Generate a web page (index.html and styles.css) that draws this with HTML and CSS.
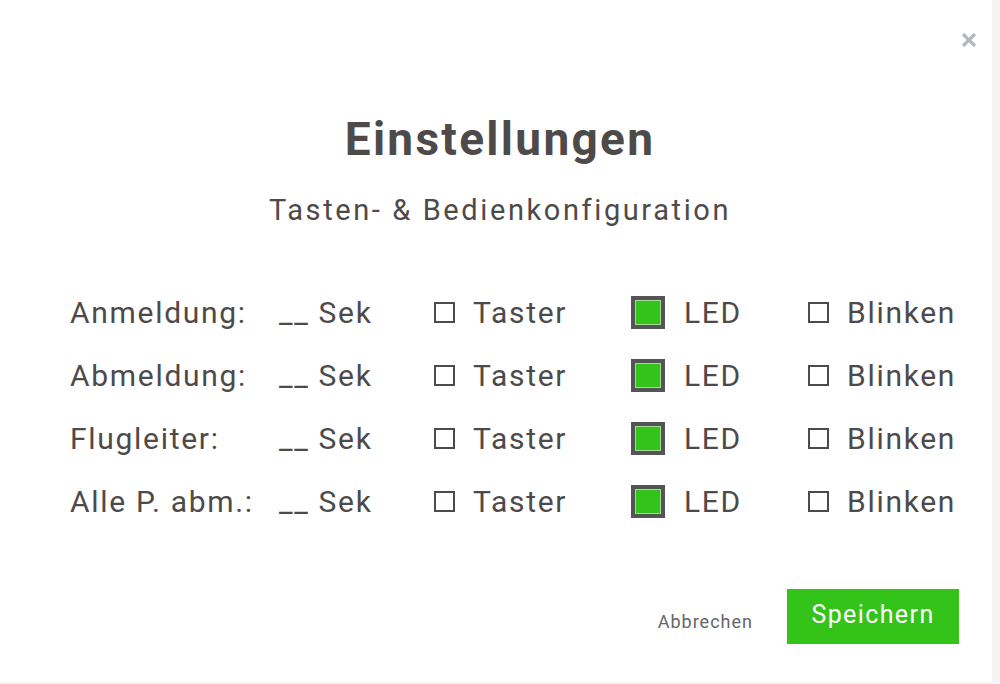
FILE: index.html
```html
<!DOCTYPE html>
<html lang="de">
<head>
<meta charset="utf-8">
<title>Einstellungen</title>
<link rel="stylesheet" href="styles.css">
</head>
<body>
<div class="modal">
  <button class="close" aria-label="Schließen">
    <svg width="16" height="16" viewBox="0 0 16 16"><path d="M2 2L14 14M14 2L2 14" stroke="#b3babe" stroke-width="3.2" stroke-linecap="butt"/></svg>
  </button>
  <h1 class="title">Einstellungen</h1>
  <h2 class="subtitle">Tasten- &amp; Bedienkonfiguration</h2>
  <div class="rows">
    <div class="row">
      <span class="label">Anmeldung:</span>
      <span class="sek">__ Sek</span>
      <span class="opt"><span class="box"></span>Taster</span>
      <span class="opt led"><span class="box on"></span>LED</span>
      <span class="opt"><span class="box"></span>Blinken</span>
    </div>
    <div class="row">
      <span class="label">Abmeldung:</span>
      <span class="sek">__ Sek</span>
      <span class="opt"><span class="box"></span>Taster</span>
      <span class="opt led"><span class="box on"></span>LED</span>
      <span class="opt"><span class="box"></span>Blinken</span>
    </div>
    <div class="row">
      <span class="label">Flugleiter:</span>
      <span class="sek">__ Sek</span>
      <span class="opt"><span class="box"></span>Taster</span>
      <span class="opt led"><span class="box on"></span>LED</span>
      <span class="opt"><span class="box"></span>Blinken</span>
    </div>
    <div class="row">
      <span class="label">Alle P. abm.:</span>
      <span class="sek">__ Sek</span>
      <span class="opt"><span class="box"></span>Taster</span>
      <span class="opt led"><span class="box on"></span>LED</span>
      <span class="opt"><span class="box"></span>Blinken</span>
    </div>
  </div>
  <div class="actions">
    <button class="cancel">Abbrechen</button>
    <button class="save">Speichern</button>
  </div>
</div>
</body>
</html>
```
FILE: styles.css
```css
html, body {
  margin: 0;
  padding: 0;
}
body {
  background: #f4f4f4;
  font-family: Roboto, "Liberation Sans", sans-serif;
  color: #4e4a4a;
}
.modal {
  position: relative;
  width: 992px;
  height: 682px;
  background: #fff;
  box-sizing: border-box;
  padding-top: 110px;
}
.close {
  position: absolute;
  top: 32px;
  left: 961px;
  width: 16px;
  height: 16px;
  padding: 0;
  border: 0;
  background: none;
  line-height: 0;
}
.title {
  margin: 0;
  text-align: center;
  font-size: 46px;
  font-weight: 700;
  letter-spacing: 2.3px;
  line-height: 58px;
  padding-left: 8px;
}
.subtitle {
  margin: 25px 0 0;
  text-align: center;
  font-size: 29px;
  font-weight: 400;
  letter-spacing: 2.6px;
  line-height: 34px;
  padding-left: 8px;
}
.rows {
  margin-top: 54px;
  padding-left: 70px;
}
.row {
  display: grid;
  grid-template-columns: 209px 155px 197px 177px auto;
  align-items: center;
  height: 63px;
  font-size: 30px;
  letter-spacing: 1.7px;
}
.opt {
  display: flex;
  align-items: center;
  gap: 18px;
}
.led {
  gap: 19px;
}
.box {
  display: inline-block;
  width: 21px;
  height: 21px;
  box-sizing: border-box;
  border: 2px solid #4e4a4a;
}
.box.on {
  width: 34px;
  height: 33px;
  border: 4px solid #545454;
  background: #33c31a;
  box-shadow: inset 0 0 0 1px #a4d898;
}
.actions {
  margin-top: 56px;
  display: flex;
  justify-content: flex-end;
  align-items: center;
  padding-right: 33px;
  gap: 34px;
}
.cancel {
  border: 0;
  background: none;
  padding: 0;
  font-family: Roboto, "Liberation Sans", sans-serif;
  font-size: 18px;
  letter-spacing: 1px;
  color: #666;
  margin-top: 10px;
}
.save {
  width: 172px;
  height: 55px;
  border: 0;
  background: #34c319;
  color: #fff;
  font-family: Roboto, "Liberation Sans", sans-serif;
  font-size: 25px;
  letter-spacing: 1.4px;
  padding: 0 0 4px;
}
```
